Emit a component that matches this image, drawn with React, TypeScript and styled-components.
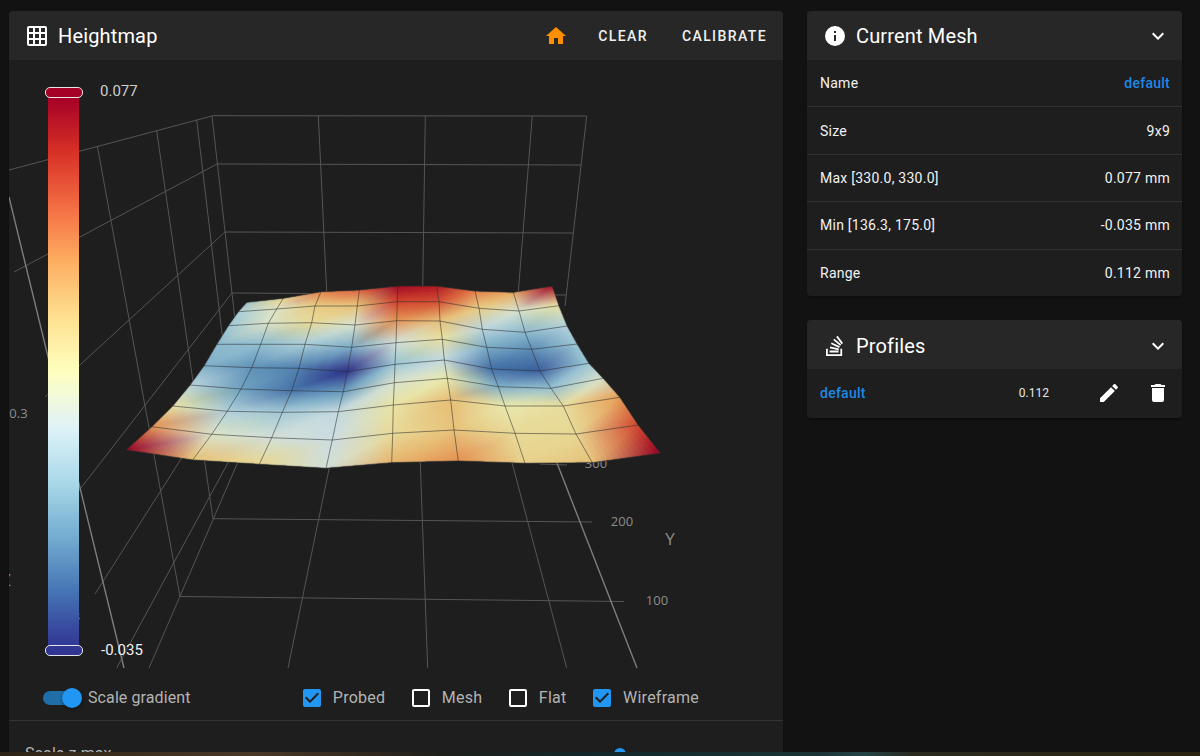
import React, { useMemo } from 'react';
import styled, { createGlobalStyle } from 'styled-components';

const GlobalStyle = createGlobalStyle`
	html, body {
		margin: 0;
		height: 100%;
		background: #121212;
		overflow: hidden;
	}
	body {
		font-family: Roboto, 'Liberation Sans', sans-serif;
		color: #fff;
	}
`;

const mdi = {
	grid: 'M10,4V8H14V4H10M16,4V8H20V4H16M16,10V14H20V10H16M16,16V20H20V16H16M14,20V16H10V20H14M8,20V16H4V20H8M8,14V10H4V14H8M8,8V4H4V8H8M10,14H14V10H10V14M4,2H20A2,2 0 0,1 22,4V20A2,2 0 0,1 20,22H4C2.92,22 2,21.1 2,20V4A2,2 0 0,1 4,2Z',
	home: 'M10,20V14H14V20H19V12H22L12,3L2,12H5V20H10Z',
	info: 'M13,9H11V7H13M13,17H11V11H13M12,2A10,10 0 0,0 2,12A10,10 0 0,0 12,22A10,10 0 0,0 22,12A10,10 0 0,0 12,2Z',
	chevron: 'M7.41,8.58L12,13.17L16.59,8.58L18,10L12,16L6,10L7.41,8.58Z',
	stack: 'M17.36,20.2V14.82H19.15V22H3V14.82H4.8V20.2H17.36M6.77,14.32L7.14,12.56L15.93,14.41L15.56,16.17L6.77,14.32M7.93,10.11L8.69,8.5L16.83,12.28L16.07,13.9L7.93,10.11M10.19,6.12L11.34,4.74L18.24,10.5L17.09,11.87L10.19,6.12M14.64,1.87L20,9.08L18.56,10.15L13.2,2.94L14.64,1.87M6.59,18.41V16.61H15.57V18.41H6.59Z',
	pencil: 'M20.71,7.04C21.1,6.65 21.1,6 20.71,5.63L18.37,3.29C18,2.9 17.35,2.9 16.96,3.29L15.12,5.12L18.87,8.87M3,17.25V21H6.75L17.81,9.93L14.06,6.18L3,17.25Z',
	trash: 'M19,4H15.5L14.5,3H9.5L8.5,4H5V6H19M6,19A2,2 0 0,0 8,21H16A2,2 0 0,0 18,19V7H6V19Z',
	checked: 'M10,17L5,12L6.41,10.58L10,14.17L17.59,6.58L19,8M19,3H5C3.89,3 3,3.89 3,5V19A2,2 0 0,0 5,21H19A2,2 0 0,0 21,19V5C21,3.89 20.1,3 19,3Z',
	blank: 'M19,3H5C3.89,3 3,3.89 3,5V19A2,2 0 0,0 5,21H19A2,2 0 0,0 21,19V5C21,3.89 20.1,3 19,3M19,5V19H5V5H19Z',
};

const Icon = ({ d, color = '#fff' }: { d: string; color?: string }) => (
	<svg width='24' height='24' viewBox='0 0 24 24' style={{ flex: 'none', display: 'block' }}>
		<path d={d} fill={color} />
	</svg>
);

const Page = styled.div`
	display: grid;
	grid-template-columns: 774px 375px;
	column-gap: 24px;
	align-items: start;
	padding: 11px 0 0 9px;
	height: 756px;
	box-sizing: border-box;
	overflow: hidden;
`;

const SideColumn = styled.div`
	display: flex;
	flex-direction: column;
	gap: 24px;
`;

const Card = styled.section`
	background: #1e1e1e;
	border-radius: 4px;
	overflow: hidden;
	box-shadow: 0 2px 2px rgba(0, 0, 0, 0.25);
`;

const Header = styled.header`
	display: flex;
	align-items: center;
	height: 49px;
	box-sizing: border-box;
	background: #272727;
	padding: 0 12px 0 16px;
`;

const ProfilesHeader = styled(Header)`
	padding-top: 2px;
`;

const Title = styled.h2`
	margin: 0 0 0 9px;
	font-size: 20px;
	font-weight: 400;
	letter-spacing: 0.15px;
	color: #fff;
	flex: 1;
`;

const HomeButton = styled.div`
	display: flex;
	margin-right: 14px;
`;

const HeaderButton = styled.div`
	padding: 0 16px;
	font-size: 14px;
	font-weight: 500;
	letter-spacing: 1.4px;
	color: #f0f0f0;
	text-transform: uppercase;
	margin-right: ${(p: { $last?: boolean }) => (p.$last ? '-12px' : '2px')};
`;

const ChartArea = styled.div`
	position: relative;
	height: 609px;
	overflow: hidden;
`;

const ColorBar = styled.div`
	position: absolute;
	left: 39px;
	top: 37px;
	width: 31px;
	height: 549px;
	background: linear-gradient(
		to bottom,
		#a50026 0%,
		#d73027 10%,
		#f46d43 20%,
		#fdae61 30%,
		#fee090 40%,
		#ffffbf 50%,
		#e0f3f8 60%,
		#abd9e9 70%,
		#74add1 80%,
		#4575b4 90%,
		#313695 100%
	);
`;

const BarHandle = styled.div<{ $end: 'top' | 'bottom' }>`
	position: absolute;
	left: -3.5px;
	width: 38px;
	height: 11px;
	box-sizing: border-box;
	border: 1px solid #e6e6e6;
	border-radius: 5px;
	background: ${(p) => (p.$end === 'top' ? '#a50026' : '#313695')};
	${(p) => (p.$end === 'top' ? 'top: -10px;' : 'bottom: -10px;')}
`;

const BarLabel = styled.span<{ $left: number; $top: number; $bright?: boolean }>`
	position: absolute;
	left: ${(p) => p.$left}px;
	top: ${(p) => p.$top}px;
	font-size: 15px;
	line-height: 18px;
	color: ${(p) => (p.$bright ? '#f2f2f2' : '#cfcfcf')};
`;

const ControlRow = styled.div`
	display: flex;
	align-items: center;
	justify-content: space-between;
	height: 52px;
	padding: 7px 84px 0 34px;
	box-sizing: border-box;
	border-bottom: 1px solid #343434;
`;

const SwitchGroup = styled.div`
	display: flex;
	align-items: center;
	gap: 6px;
`;

const SwitchTrack = styled.div`
	position: relative;
	width: 32px;
	height: 14px;
	margin-right: 7px;
	border-radius: 7px;
	background: #1f6ea8;
`;

const SwitchKnob = styled.div`
	position: absolute;
	right: -7px;
	top: -3px;
	width: 20px;
	height: 20px;
	border-radius: 50%;
	background: #2196f3;
	box-shadow: 0 1px 3px rgba(0, 0, 0, 0.5);
`;

const ControlLabel = styled.span`
	font-size: 16px;
	line-height: 24px;
	letter-spacing: 0.1px;
	color: #b3b3b3;
`;

const CheckGroup = styled.div`
	display: flex;
	align-items: center;
	gap: 23.5px;
`;

const CheckItem = styled.div`
	display: flex;
	align-items: center;
	gap: 9px;
	${ControlLabel} {
		letter-spacing: 0.25px;
	}
`;

const SliderRow = styled.div`
	display: flex;
	align-items: center;
	gap: 16px;
	padding: 21px 16px;
`;

const SliderTrack = styled.div`
	position: relative;
	flex: 1;
	height: 2px;
	background: #1f6ea8;
`;

const SliderThumb = styled.div`
	position: absolute;
	top: -5px;
	width: 12px;
	height: 12px;
	margin-left: -6px;
	border-radius: 50%;
	background: #2196f3;
`;

const InfoRow = styled.div<{ $last?: boolean }>`
	display: flex;
	align-items: center;
	justify-content: space-between;
	height: ${(p) => (p.$last ? '46.6px' : '47.4px')};
	box-sizing: border-box;
	padding: 0 12px 0 13px;
	font-size: 14px;
	letter-spacing: 0.25px;
	color: #f2f2f2;
	border-bottom: ${(p) => (p.$last ? 'none' : '1px solid #303030')};
`;

const NameLink = styled.span`
	color: #1e88e5;
	font-weight: 500;
	letter-spacing: 0.25px;
`;

const ProfileRow = styled.div`
	display: flex;
	align-items: center;
	height: 49px;
	padding: 0 12px 2px 13px;
	box-sizing: border-box;
	font-size: 14px;
`;

const ProfileRange = styled.span`
	margin-left: auto;
	font-size: 12px;
	color: #e6e6e6;
`;

const ProfileAction = styled.div<{ $gap: number }>`
	display: flex;
	margin-left: ${(p) => p.$gap}px;
`;

const BottomStrip = styled.div`
	position: fixed;
	left: 0;
	right: 0;
	bottom: 0;
	height: 4px;
	background: linear-gradient(
		to right,
		#2d2417 0%,
		#4a3826 21%,
		#1e1e1a 37%,
		#12282a 50%,
		#1a3436 68%,
		#234446 72%,
		#2a2a20 76%,
		#2a2410 100%
	);
`;

// vertices of the bed mesh, read from the plot: [x, y] per row (back to front), per column
const MESH: [number, number][][] = [
	[[246.7, 302.3], [283.3, 298.3], [321, 291.7], [359.3, 290], [398, 286], [436.7, 286], [475, 291], [513.3, 292.3], [552.3, 286]],
	[[238.3, 311.7], [276.7, 309], [315, 306], [357.3, 306], [397.3, 301.7], [439, 301.7], [479, 308.3], [519, 311], [559, 305.7]],
	[[228.3, 325.7], [268.3, 323.3], [311.7, 322.7], [355, 325], [396.7, 320.7], [440, 321], [482.3, 329.3], [525, 332.3], [567.3, 326]],
	[[216.7, 344.3], [260.7, 344.3], [305, 344.3], [351.7, 347.3], [396, 342.7], [442.3, 339.3], [486.7, 347.3], [531.7, 349.3], [577.3, 344]],
	[[204, 365.7], [251.7, 367.7], [299, 368.3], [347.3, 371.7], [395, 364.3], [444.3, 360], [491.7, 369], [540, 371], [589, 363.3]],
	[[190, 385], [241, 389], [291.7, 390.7], [343.3, 391.7], [394.3, 382.7], [447.3, 378.3], [498.3, 386.7], [551, 388.3], [603.3, 378.3]],
	[[172.7, 406], [227.3, 411.3], [282.3, 412.3], [338.3, 411.7], [393.3, 405], [450.7, 400], [505, 406], [563.3, 406], [620, 397.3]],
	[[151.7, 426.7], [211.7, 434.3], [271.7, 437.7], [332.3, 440], [392.7, 433.3], [454, 430], [515, 433.3], [576, 434], [638.3, 425]],
	[[126, 450], [192.7, 460], [259.3, 464.3], [326, 468.3], [391.7, 462.7], [458.3, 461], [525, 463.3], [592.3, 462.7], [660.7, 453.3]],
];

// height per vertex, 0 is the bottom of the colour bar and 1 the top
const HEIGHTS = [
	[0.3, 0.57, 0.75, 0.8, 0.98, 0.95, 0.76, 0.68, 0.97],
	[0.33, 0.46, 0.6, 0.62, 0.86, 0.84, 0.6, 0.44, 0.52],
	[0.31, 0.45, 0.55, 0.44, 0.72, 0.63, 0.37, 0.27, 0.35],
	[0.27, 0.28, 0.33, 0.24, 0.42, 0.53, 0.24, 0.17, 0.3],
	[0.25, 0.18, 0.14, 0.0, 0.3, 0.38, 0.11, 0.08, 0.3],
	[0.36, 0.21, 0.12, 0.19, 0.44, 0.5, 0.24, 0.28, 0.44],
	[0.52, 0.34, 0.31, 0.38, 0.52, 0.63, 0.5, 0.54, 0.7],
	[0.72, 0.45, 0.42, 0.4, 0.55, 0.62, 0.55, 0.56, 0.85],
	[1.0, 0.62, 0.56, 0.42, 0.65, 0.72, 0.58, 0.62, 1.0],
];

const SCALE = ['#a50026', '#d73027', '#f46d43', '#fdae61', '#fee090', '#ffffbf', '#e0f3f8', '#abd9e9', '#74add1', '#4575b4', '#313695']
	.reverse()
	.map((c) => [1, 3, 5].map((i) => parseInt(c.slice(i, i + 2), 16)));

const heightColor = (t: number) => {
	const p = Math.min(t, 0.9999) * (SCALE.length - 1);
	const i = Math.floor(p);
	return SCALE[i].map((v, k) => (v + (SCALE[i + 1][k] - v) * (p - i)) * 0.91);
};

const lerp = (a: number[], b: number[], f: number) => a.map((v, i) => v + (b[i] - v) * f);

const SUBDIV = 12;

const buildFacets = () => {
	const colors = HEIGHTS.map((row) => row.map(heightColor));
	const facets: { points: string; fill: string }[] = [];
	for (let r = 0; r < 8; r++) {
		for (let c = 0; c < 8; c++) {
			const at = (u: number, v: number) => lerp(lerp(MESH[r][c], MESH[r][c + 1], u), lerp(MESH[r + 1][c], MESH[r + 1][c + 1], u), v);
			for (let i = 0; i < SUBDIV; i++) {
				for (let j = 0; j < SUBDIV; j++) {
					const u = (i + 0.5) / SUBDIV;
					const v = (j + 0.5) / SUBDIV;
					// each cell is two triangles, split from its top right to its bottom left corner
					const [tl, tr, bl, br] = [colors[r][c], colors[r][c + 1], colors[r + 1][c], colors[r + 1][c + 1]];
					const rgb =
						u + v <= 1
							? tl.map((x, k) => x + u * (tr[k] - x) + v * (bl[k] - x))
							: br.map((x, k) => x + (1 - u) * (bl[k] - x) + (1 - v) * (tr[k] - x));
					const corners = [at(i / SUBDIV, j / SUBDIV), at((i + 1) / SUBDIV, j / SUBDIV), at((i + 1) / SUBDIV, (j + 1) / SUBDIV), at(i / SUBDIV, (j + 1) / SUBDIV)];
					facets.push({
						points: corners.map((p) => `${p[0].toFixed(1)},${p[1].toFixed(1)}`).join(' '),
						fill: `rgb(${rgb.map(Math.round).join(',')})`,
					});
				}
			}
		}
	}
	return facets;
};

const OUTLINE = [...MESH[0], ...MESH.map((row) => row[8]), ...[...MESH[8]].reverse(), ...MESH.map((row) => row[0]).reverse()].join(' ');

// box lines as x1 y1 x2 y2, in page coordinates
const GRID_LINES = [
	// back wall
	[212, 115.7, 586.7, 116], [217.5, 164, 581, 165], [225, 232, 573, 233], [232, 293, 566, 295],
	[212, 116, 235, 320], [318.3, 115.7, 326.7, 292], [425.3, 116, 422.7, 288], [532.3, 116, 518.3, 292], [586.7, 116, 565, 306],
	// left wall
	[212, 116, 9, 170], [217, 164, 14, 272], [225, 232, 45, 397], [232, 293, 60, 515],
	[97.3, 146, 180, 596.5], [156.7, 131, 213, 519], [196.7, 120, 224, 350],
	[260, 335, 95, 594], [300, 330, 116.7, 668],
	// floor
	[250, 434, 149, 668], [213, 518.7, 592, 522], [180, 596.5, 624, 601.5], [540, 464, 567, 465],
	[335, 440, 288, 668], [420, 455, 427.7, 668], [510, 455, 566.7, 668],
];

const EDGE_LINES = [
	[9, 197, 124, 668],
	[548, 440, 637, 668],
];

const TICKS = [
	{ x: 596, y: 468, label: '300', size: 13 },
	{ x: 622, y: 526, label: '200', size: 13 },
	{ x: 657, y: 605, label: '100', size: 13 },
	{ x: 670, y: 545, label: 'Y', size: 17 },
	{ x: 18.5, y: 418, label: '0.3', size: 13 },
	{ x: 71, y: 621, label: '0.3', size: 13 },
	{ x: 6, y: 586, label: 'Z', size: 17 },
];

const HeightmapSurface = () => {
	const facets = useMemo(buildFacets, []);
	return (
		<svg width='774' height='609' viewBox='9 60 774 609' style={{ display: 'block' }}>
			<defs>
				<clipPath id='surface-outline'>
					<polygon points={OUTLINE} />
				</clipPath>
				<filter id='surface-soften' x='-2%' y='-2%' width='104%' height='104%'>
					<feGaussianBlur stdDeviation='0.9' />
				</filter>
			</defs>
			{GRID_LINES.map(([x1, y1, x2, y2], i) => (
				<line key={i} x1={x1} y1={y1} x2={x2} y2={y2} stroke='#555' strokeWidth='1' />
			))}
			{EDGE_LINES.map(([x1, y1, x2, y2], i) => (
				<line key={i} x1={x1} y1={y1} x2={x2} y2={y2} stroke='#7d7d7d' strokeWidth='1.4' />
			))}
			{TICKS.map((t) => (
				<text key={t.label + t.x} x={t.x} y={t.y} fontSize={t.size} fill='#8c8c8c' textAnchor='middle' fontFamily="'Open Sans', sans-serif">
					{t.label}
				</text>
			))}
			<g clipPath='url(#surface-outline)'>
				<g filter='url(#surface-soften)' shapeRendering='crispEdges'>
					{facets.map((f, i) => (
						<polygon key={i} points={f.points} fill={f.fill} stroke={f.fill} strokeWidth='1.2' />
					))}
				</g>
			</g>
			{MESH.map((row, r) => (
				<polyline key={r} points={row.join(' ')} fill='none' stroke='#2a2a2a' strokeOpacity='0.6' strokeWidth='0.9' />
			))}
			{MESH[0].map((_, c) => (
				<polyline key={c} points={MESH.map((row) => row[c]).join(' ')} fill='none' stroke='#2a2a2a' strokeOpacity='0.6' strokeWidth='0.9' />
			))}
		</svg>
	);
};

const CheckOption = ({ label, checked }: { label: string; checked?: boolean }) => (
	<CheckItem>
		<Icon d={checked ? mdi.checked : mdi.blank} color={checked ? '#2196f3' : '#fff'} />
		<ControlLabel>{label}</ControlLabel>
	</CheckItem>
);

const MESH_INFO = [
	{ name: 'Size', value: '9x9' },
	{ name: 'Max [330.0, 330.0]', value: '0.077 mm' },
	{ name: 'Min [136.3, 175.0]', value: '-0.035 mm' },
	{ name: 'Range', value: '0.112 mm' },
];

const App = () => {
	return (
		<Page>
			<GlobalStyle />
			<Card>
				<Header>
					<Icon d={mdi.grid} />
					<Title>Heightmap</Title>
					<HomeButton>
						<Icon d={mdi.home} color='#ff8f00' />
					</HomeButton>
					<HeaderButton>Clear</HeaderButton>
					<HeaderButton $last>Calibrate</HeaderButton>
				</Header>
				<ChartArea>
					<HeightmapSurface />
					<ColorBar>
						<BarHandle $end='top' />
						<BarHandle $end='bottom' />
					</ColorBar>
					<BarLabel $left={91} $top={22}>0.077</BarLabel>
					<BarLabel $left={92} $top={581} $bright>-0.035</BarLabel>
				</ChartArea>
				<ControlRow>
					<SwitchGroup>
						<SwitchTrack>
							<SwitchKnob />
						</SwitchTrack>
						<ControlLabel>Scale gradient</ControlLabel>
					</SwitchGroup>
					<CheckGroup>
						<CheckOption label='Probed' checked />
						<CheckOption label='Mesh' />
						<CheckOption label='Flat' />
						<CheckOption label='Wireframe' checked />
					</CheckGroup>
				</ControlRow>
				<SliderRow>
					<ControlLabel>Scale z max</ControlLabel>
					<SliderTrack>
						<SliderThumb style={{ left: `${(100 * (620 - 127)) / 640}%` }} />
					</SliderTrack>
				</SliderRow>
			</Card>
			<SideColumn>
				<Card>
					<Header>
						<Icon d={mdi.info} />
						<Title>Current Mesh</Title>
						<Icon d={mdi.chevron} />
					</Header>
					<InfoRow>
						<span>Name</span>
						<NameLink>default</NameLink>
					</InfoRow>
					{MESH_INFO.map((row, i) => (
						<InfoRow key={row.name} $last={i === MESH_INFO.length - 1}>
							<span>{row.name}</span>
							<span>{row.value}</span>
						</InfoRow>
					))}
				</Card>
				<Card>
					<ProfilesHeader>
						<Icon d={mdi.stack} />
						<Title>Profiles</Title>
						<Icon d={mdi.chevron} />
					</ProfilesHeader>
					<ProfileRow>
						<NameLink>default</NameLink>
						<ProfileRange>0.112</ProfileRange>
						<ProfileAction $gap={48}>
							<Icon d={mdi.pencil} />
						</ProfileAction>
						<ProfileAction $gap={25}>
							<Icon d={mdi.trash} />
						</ProfileAction>
					</ProfileRow>
				</Card>
			</SideColumn>
			<BottomStrip />
		</Page>
	);
};

export default App;
